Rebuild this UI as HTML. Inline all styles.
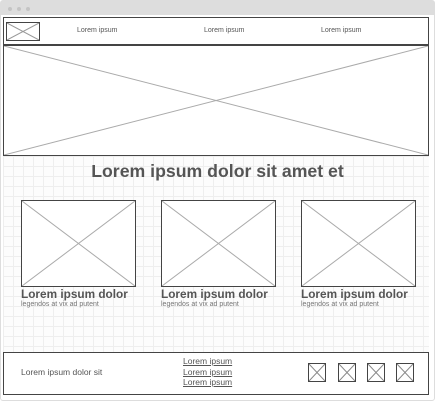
<!DOCTYPE html>
<html><head><style>
*{margin:0;padding:0;box-sizing:border-box}
body{width:435px;height:401px;background:#fff;position:relative;overflow:hidden;font-family:"Liberation Sans",sans-serif;color:#555}
.a{position:absolute}
.bx{position:absolute;border:1px solid #444;background:#fff}
.bx svg{position:absolute;left:0;top:0;width:100%;height:100%}
.grid{background-color:#fcfcfc;background-image:linear-gradient(#eee 1px,transparent 1px),linear-gradient(90deg,#eee 1px,transparent 1px);background-size:10px 10px}
</style></head><body>
<div class="a" style="left:0;top:0;width:435px;height:401px;border:1px solid #ddd;border-radius:3px"></div>
<div class="a" style="left:1px;top:1px;width:433px;height:14px;background:#ddd"></div>
<div class="a" style="left:8px;top:7px;width:4px;height:4px;border-radius:2px;background:#c4c4c4"></div>
<div class="a" style="left:17px;top:7px;width:4px;height:4px;border-radius:2px;background:#c4c4c4"></div>
<div class="a" style="left:26px;top:7px;width:4px;height:4px;border-radius:2px;background:#c4c4c4"></div>
<div class="a grid" style="left:3px;top:156px;width:426px;height:196px"></div>
<div class="bx" style="left:3px;top:17px;width:426px;height:29px;border-bottom-width:2px"></div>
<div class="bx" style="left:6px;top:22px;width:34px;height:19px"><svg preserveAspectRatio="none" viewBox="0 0 10 10"><path d="M0 0L10 10M10 0L0 10" stroke="#999" vector-effect="non-scaling-stroke" fill="none"/></svg></div>
<div class="a" style="left:77px;top:27px;font-size:7px">Lorem ipsum</div>
<div class="a" style="left:204px;top:27px;font-size:7px">Lorem ipsum</div>
<div class="a" style="left:321px;top:27px;font-size:7px">Lorem ipsum</div>
<div class="bx" style="left:3px;top:45px;width:426px;height:111px"><svg preserveAspectRatio="none" viewBox="0 0 10 10"><path d="M0 0L10 10M10 0L0 10" stroke="#aaa" vector-effect="non-scaling-stroke" fill="none"/></svg></div>
<div class="a" style="left:0;width:435px;top:161px;text-align:center;font-size:17.7px;font-weight:bold;color:#555">Lorem ipsum dolor sit amet et</div>
<div class="bx" style="left:21px;top:200px;width:115px;height:87px"><svg preserveAspectRatio="none" viewBox="0 0 10 10"><path d="M0 0L10 10M10 0L0 10" stroke="#aaa" vector-effect="non-scaling-stroke" fill="none"/></svg></div>
<div class="bx" style="left:161px;top:200px;width:115px;height:87px"><svg preserveAspectRatio="none" viewBox="0 0 10 10"><path d="M0 0L10 10M10 0L0 10" stroke="#aaa" vector-effect="non-scaling-stroke" fill="none"/></svg></div>
<div class="bx" style="left:301px;top:200px;width:115px;height:87px"><svg preserveAspectRatio="none" viewBox="0 0 10 10"><path d="M0 0L10 10M10 0L0 10" stroke="#aaa" vector-effect="non-scaling-stroke" fill="none"/></svg></div>
<div class="a" style="left:21px;top:287px;font-size:11.8px;font-weight:bold">Lorem ipsum dolor</div>
<div class="a" style="left:161px;top:287px;font-size:11.8px;font-weight:bold">Lorem ipsum dolor</div>
<div class="a" style="left:301px;top:287px;font-size:11.8px;font-weight:bold">Lorem ipsum dolor</div>
<div class="a" style="left:21px;top:301px;font-size:7px;color:#777">legendos at vix ad putent</div>
<div class="a" style="left:161px;top:301px;font-size:7px;color:#777">legendos at vix ad putent</div>
<div class="a" style="left:301px;top:301px;font-size:7px;color:#777">legendos at vix ad putent</div>
<div class="bx" style="left:3px;top:352px;width:426px;height:43px"></div>
<div class="a" style="left:21px;top:367px;font-size:8.5px">Lorem ipsum dolor sit</div>
<div class="a" style="left:183px;top:356px;font-size:8.5px;line-height:10.5px;text-decoration:underline">Lorem ipsum<br>Lorem ipsum<br>Lorem ipsum</div>
<div class="bx" style="left:308px;top:363px;width:18px;height:19px"><svg preserveAspectRatio="none" viewBox="0 0 10 10"><path d="M0 0L10 10M10 0L0 10" stroke="#888" vector-effect="non-scaling-stroke" fill="none"/></svg></div>
<div class="bx" style="left:338px;top:363px;width:18px;height:19px"><svg preserveAspectRatio="none" viewBox="0 0 10 10"><path d="M0 0L10 10M10 0L0 10" stroke="#888" vector-effect="non-scaling-stroke" fill="none"/></svg></div>
<div class="bx" style="left:367px;top:363px;width:18px;height:19px"><svg preserveAspectRatio="none" viewBox="0 0 10 10"><path d="M0 0L10 10M10 0L0 10" stroke="#888" vector-effect="non-scaling-stroke" fill="none"/></svg></div>
<div class="bx" style="left:396px;top:363px;width:18px;height:19px"><svg preserveAspectRatio="none" viewBox="0 0 10 10"><path d="M0 0L10 10M10 0L0 10" stroke="#888" vector-effect="non-scaling-stroke" fill="none"/></svg></div>
</body></html>
